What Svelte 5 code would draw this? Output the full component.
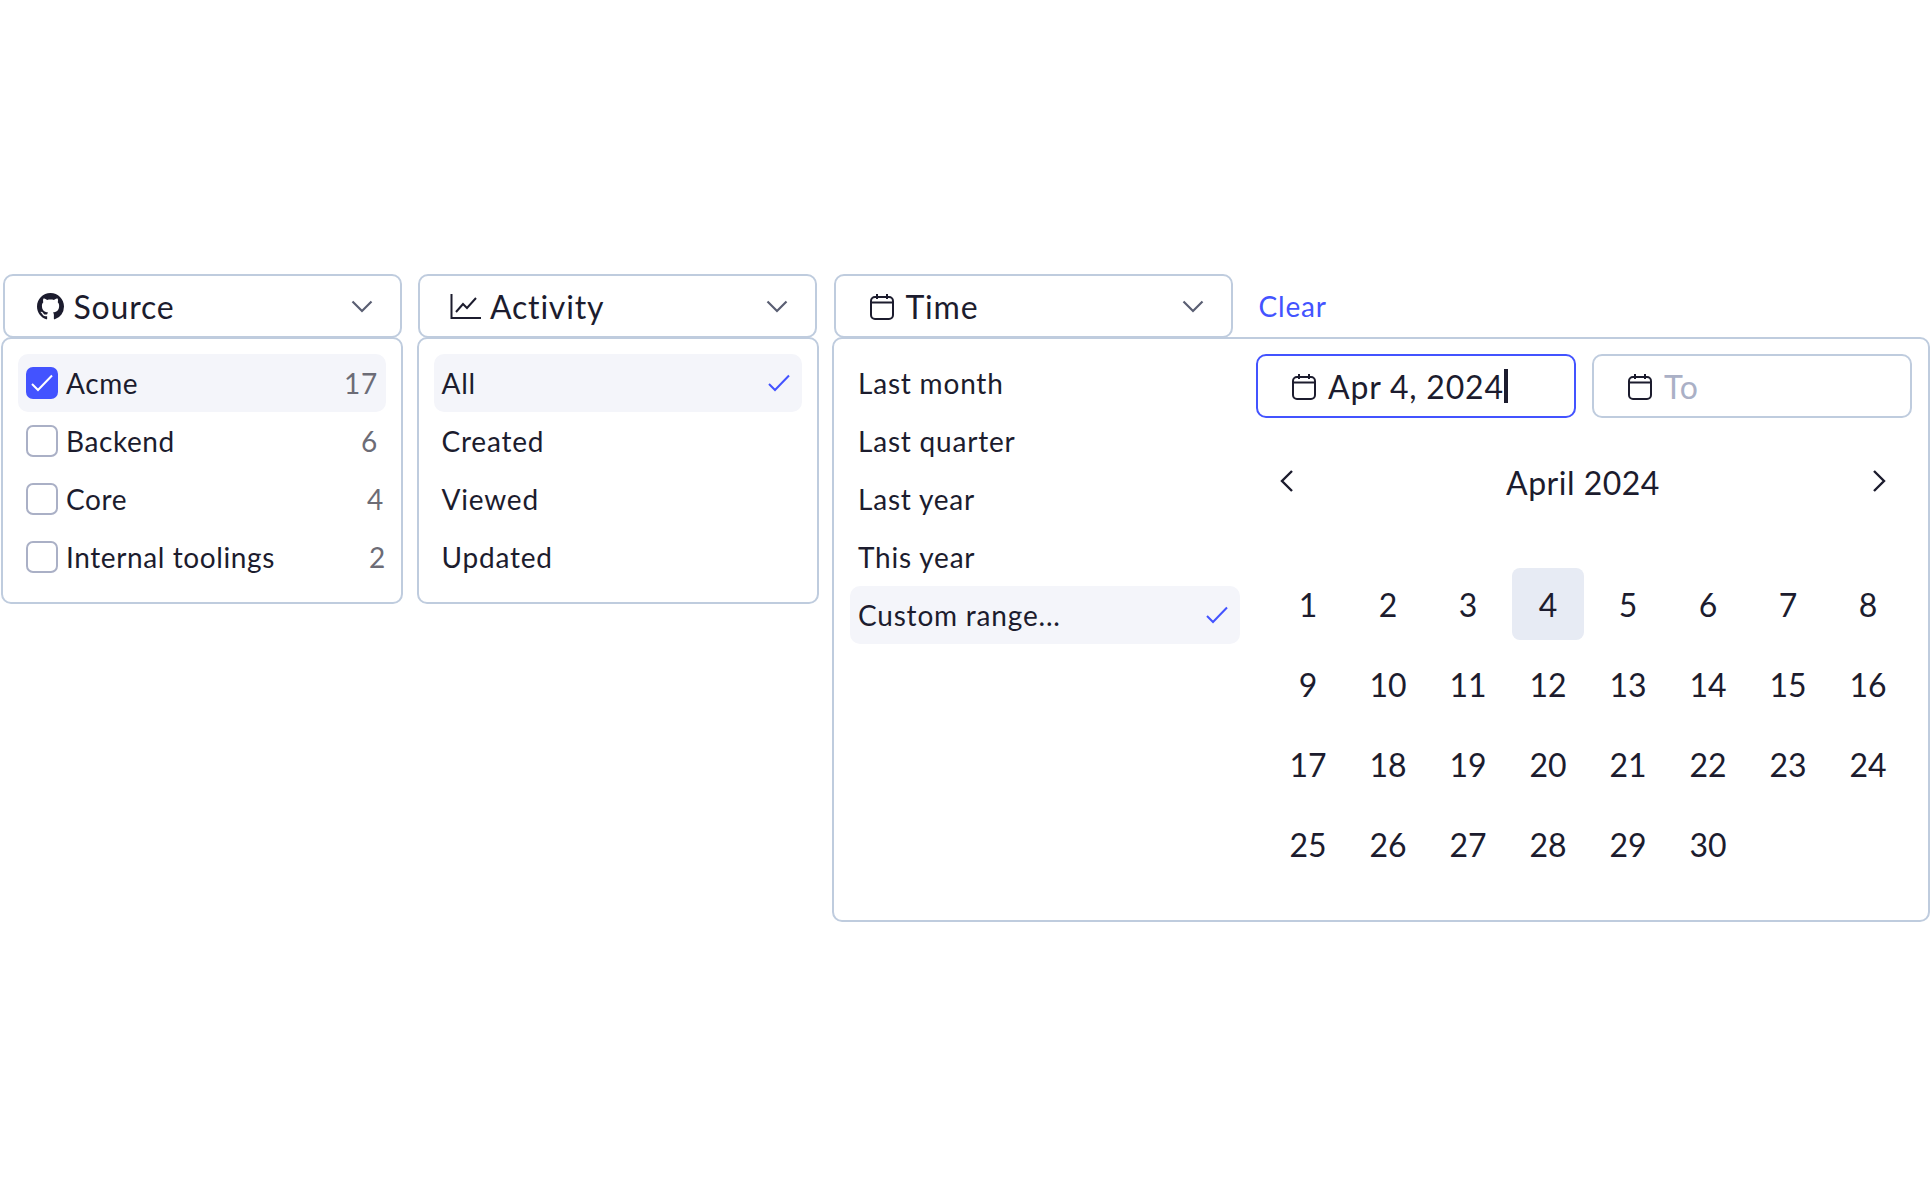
<script>
  const sources = [
    { name: "Acme", count: 17, checked: true },
    { name: "Backend", count: 6 },
    { name: "Core", count: 4 },
    { name: "Internal toolings", count: 2 }
  ];
  const activities = ["All", "Created", "Viewed", "Updated"];
  const ranges = ["Last month", "Last quarter", "Last year", "This year", "Custom range..."];
  const days = Array.from({ length: 30 }, (_, i) => i + 1);
</script>

{#snippet chevron()}
  <svg class="chev" width="22" height="13" viewBox="0 0 22 13" fill="none" stroke="currentColor" stroke-width="2.2">
    <path d="M1.5 1.5l9.5 9.5 9.5-9.5" />
  </svg>
{/snippet}

{#snippet calendar()}
  <svg class="cal" width="24" height="27" viewBox="0 0 24 27" fill="none" stroke="currentColor" stroke-width="2">
    <rect x="1" y="4" width="22" height="22" rx="4" />
    <path d="M1 9.5h22M7 1v5M17 1v5" />
  </svg>
{/snippet}

{#snippet tick()}
  <svg class="tick" width="22" height="18" viewBox="0 0 22 18" fill="none" stroke="currentColor" stroke-width="2">
    <path d="M1 10l6 6L21 1.5" />
  </svg>
{/snippet}

<div class="filters">
  <div class="col">
    <button class="select">
      <svg class="icon" width="27" height="27" viewBox="0 0 16 16" fill="currentColor">
        <path d="M8 0C3.58 0 0 3.58 0 8c0 3.54 2.29 6.53 5.47 7.59.4.07.55-.17.55-.38 0-.19-.01-.82-.01-1.49-2.01.37-2.53-.49-2.69-.94-.09-.23-.48-.94-.82-1.13-.28-.15-.68-.52-.01-.53.63-.01 1.08.58 1.23.82.72 1.21 1.87.87 2.33.66.07-.52.28-.87.51-1.07-1.78-.2-3.64-.89-3.64-3.95 0-.87.31-1.59.82-2.15-.08-.2-.36-1.02.08-2.12 0 0 .67-.21 2.2.82.64-.18 1.32-.27 2-.27.68 0 1.36.09 2 .27 1.53-1.04 2.2-.82 2.2-.82.44 1.1.16 1.92.08 2.12.51.56.82 1.27.82 2.15 0 3.07-1.87 3.75-3.65 3.95.29.25.54.73.54 1.48 0 1.07-.01 1.93-.01 2.2 0 .21.15.46.55.38A8.013 8.013 0 0016 8c0-4.42-3.58-8-8-8z" />
      </svg>
      <span class="label">Source</span>
      {@render chevron()}
    </button>
    <div class="panel">
      {#each sources as s}
        <div class="item src" class:on={s.checked}>
          <span class="box" class:checked={s.checked}>
            {#if s.checked}
              <svg width="22" height="18" viewBox="0 0 22 18" fill="none" stroke="#fff" stroke-width="2"><path d="M1 10l6 6L21 1.5" /></svg>
            {/if}
          </span>
          <span class="name">{s.name}</span>
          <span class="count">{s.count}</span>
        </div>
      {/each}
    </div>
  </div>

  <div class="col">
    <button class="select">
      <svg class="icon chart" width="31" height="25" viewBox="0 0 31 25" fill="none" stroke="currentColor" stroke-width="2">
        <path d="M1.5 0v24H31M6 18l7-8 4 4 9-10" />
      </svg>
      <span class="label">Activity</span>
      {@render chevron()}
    </button>
    <div class="panel">
      {#each activities as a, i}
        <div class="item" class:on={i === 0}>
          <span class="name">{a}</span>
          {#if i === 0}{@render tick()}{/if}
        </div>
      {/each}
    </div>
  </div>

  <div class="col wide">
    <div class="head">
      <button class="select">
        {@render calendar()}
        <span class="label">Time</span>
        {@render chevron()}
      </button>
      <a class="clear" href="#clear">Clear</a>
    </div>
    <div class="panel split">
      <div class="ranges">
        {#each ranges as r, i}
          <div class="item" class:on={i === 4}>
            <span class="name">{r}</span>
            {#if i === 4}{@render tick()}{/if}
          </div>
        {/each}
      </div>
      <div class="picker">
        <div class="inputs">
          <div class="date focus">
            {@render calendar()}
            <span>Apr 4, 2024</span><span class="caret"></span>
          </div>
          <div class="date">
            {@render calendar()}
            <span class="ph">To</span>
          </div>
        </div>
        <div class="month">
          <svg width="14" height="24" viewBox="0 0 14 24" fill="none" stroke="currentColor" stroke-width="2.4"><path d="M12 2L2 12l10 10" /></svg>
          <span>April 2024</span>
          <svg width="14" height="24" viewBox="0 0 14 24" fill="none" stroke="currentColor" stroke-width="2.4"><path d="M2 2l10 10L2 22" /></svg>
        </div>
        <div class="grid">
          {#each days as d}
            <div class="day" class:sel={d === 4}>{d}</div>
          {/each}
        </div>
      </div>
    </div>
  </div>
</div>

<style>
  :global(body) {
    background: #fff;
  }

  .filters {
    display: flex;
    align-items: flex-start;
    gap: 13.5px;
    padding: 274px 0 0 1px;
    width: 1930px;
    box-sizing: border-box;
    font-family: Lato, "Open Sans", sans-serif;
    color: #1c1c2e;
  }

  .col {
    width: 402px;
    flex: none;
    display: flex;
    flex-direction: column;
  }

  .col.wide {
    width: 1098px;
  }

  .head {
    display: flex;
    align-items: center;
    gap: 26px;
  }

  .select {
    display: flex;
    align-items: center;
    width: 399px;
    height: 64px;
    margin: 0 0 -1px 1.5px;
    padding: 0 10px 0 32px;
    box-sizing: border-box;
    background: #fff;
    border: 2px solid #bfccde;
    border-radius: 10px;
    font: inherit;
    font-size: 32px;
    color: inherit;
    letter-spacing: 0.8px;
  }

  .head .select {
    padding-left: 34px;
  }

  .label {
    flex: 1;
    text-align: left;
    margin-left: 10px;
  }

  .head .label {
    margin-left: 12px;
  }

  .chart {
    margin: 0 -1px 0 -2px;
  }

  .chev {
    color: #5a5f73;
    margin-right: 17px;
  }

  .clear {
    color: #4353ff;
    font-size: 28px;
    text-decoration: none;
    letter-spacing: 0.8px;
  }

  .panel {
    position: relative;
    box-sizing: border-box;
    background: #fff;
    border: 2px solid #bfccde;
    border-radius: 10px;
    padding: 15px 15px 16px;
  }

  .panel.split {
    display: flex;
    height: 585px;
    padding: 15px 16px;
    gap: 16px;
  }

  .ranges {
    width: 390px;
    flex: none;
  }

  .item {
    display: flex;
    align-items: center;
    height: 58px;
    padding: 0 8px;
    border-radius: 10px;
    font-size: 28px;
    letter-spacing: 0.8px;
  }

  .item.on {
    background: #f4f5fa;
  }

  .name {
    flex: 1;
  }

  .src .name {
    margin-left: 8px;
    letter-spacing: 0.6px;
  }

  .count {
    color: #6c6c76;
  }

  .src:nth-child(3) .count {
    margin-right: -6px;
  }

  .src:nth-child(4) .count {
    margin-right: -8px;
  }

  .box {
    width: 32px;
    height: 32px;
    box-sizing: border-box;
    border: 2px solid #aab0c6;
    border-radius: 7px;
    display: flex;
    align-items: center;
    justify-content: center;
  }

  .box.checked {
    background: #4353ff;
    border-color: #4353ff;
  }

  .tick {
    color: #4353ff;
    margin-right: 4px;
  }

  .picker {
    flex: 1;
  }

  .inputs {
    display: flex;
    gap: 16px;
  }

  .date {
    flex: 1;
    height: 64px;
    box-sizing: border-box;
    display: flex;
    align-items: center;
    padding-left: 34px;
    border: 2px solid #bfccde;
    border-radius: 10px;
    font-size: 32px;
    letter-spacing: 0.8px;
  }

  .date .cal {
    margin-right: 12px;
  }

  .date.focus {
    border-color: #4353ff;
  }

  .caret {
    width: 4px;
    height: 34px;
    background: #1c1c2e;
  }

  .ph {
    color: #aab0c6;
  }

  .month {
    display: flex;
    align-items: center;
    justify-content: space-between;
    height: 80px;
    margin-top: 24px;
    padding: 0 26px 0 24px;
    font-size: 32px;
    letter-spacing: 0.5px;
  }

  .month svg {
    margin-top: -2px;
  }

  .grid {
    display: grid;
    grid-template-columns: repeat(8, 72px);
    grid-auto-rows: 72px;
    gap: 8px;
    margin: 46px 0 0 16px;
  }

  .day {
    display: flex;
    align-items: center;
    justify-content: center;
    border-radius: 8px;
    font-size: 32px;
  }

  .day.sel {
    background: #e7ebf4;
  }
</style>
